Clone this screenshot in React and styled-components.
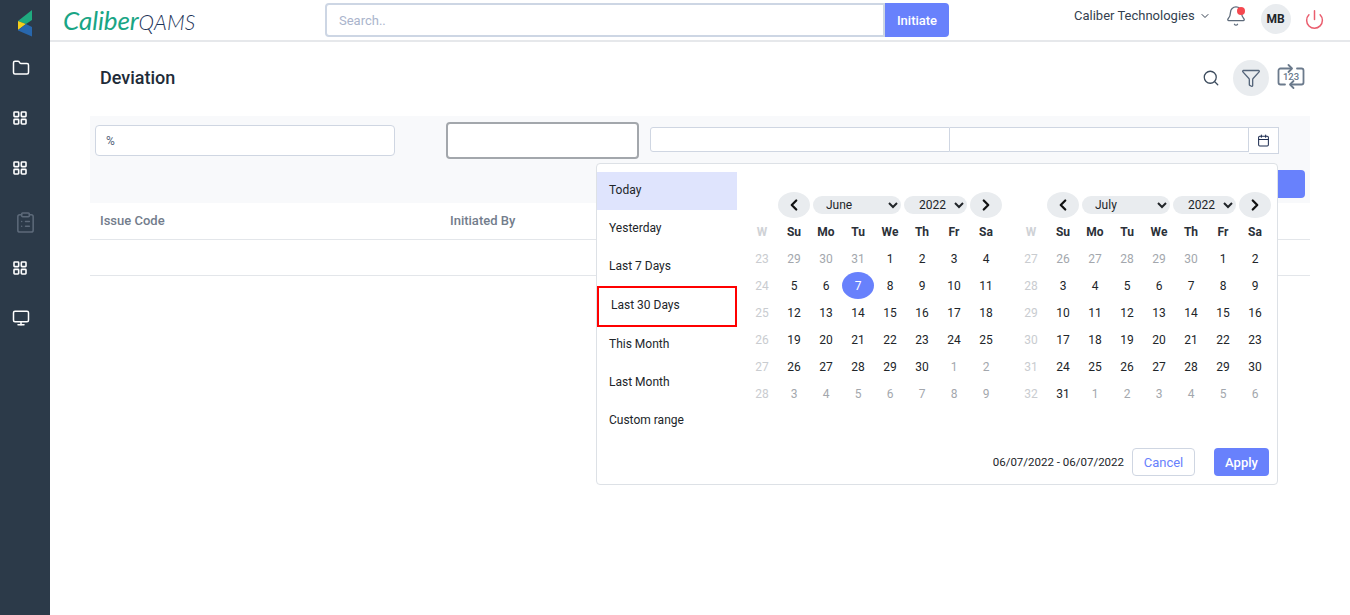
import React from 'react';
import styled, { createGlobalStyle } from 'styled-components';
import { Folder, LayoutGrid, ClipboardList, Monitor, ChevronDown, ChevronLeft, ChevronRight, Bell, Power, Search, Funnel, Calendar } from 'lucide-react';

const Global = createGlobalStyle`
  html, body { margin: 0; height: 100%; overflow: hidden; background: #fff; }
  body { font-family: Roboto, "Liberation Sans", sans-serif; color: #212529; }
  * { box-sizing: border-box; }
`;

const Shell = styled.div`display: flex; height: 615px; width: 1350px; overflow: hidden;`;
const Sidebar = styled.aside`width: 50px; flex: none; background: #2c3a49; display: flex; flex-direction: column;`;
const LogoSlot = styled.div`height: 43px; display: flex; align-items: center; justify-content: flex-start; padding: 3px 0 0 17px;`;
const NavItem = styled.div`
  height: 50px; display: flex; align-items: center; color: ${p => p.$dim ? '#5d6a7a' : '#fff'};
  padding-left: ${p => p.$left}px; padding-top: ${p => p.$dim ? 8 : 0}px;
`;
const Main = styled.div`flex: 1; min-width: 0; display: flex; flex-direction: column;`;

const Topbar = styled.header`height: 42px; flex: none; border-bottom: 2px solid #e6e8eb; display: flex; align-items: flex-start; background: #fff;`;
const Brand = styled.div`
  width: 275px; flex: none; padding: 6px 0 0 13px; font-family: "Lato", sans-serif; font-style: italic; font-size: 26px; line-height: 28px; letter-spacing: -.1px; color: #19a585; white-space: nowrap;
`;
const BrandThin = styled.span`font-family: "Lato", sans-serif; font-weight: 300; color: #1c3358; font-size: 21px; letter-spacing: .2px;`;
const SearchGroup = styled.div`width: 624px; flex: none; display: flex; margin-top: 3px; height: 34px;`;
const SearchInput = styled.input`
  flex: 1; min-width: 0; border: 2px solid #cdd6e4; border-radius: 4px 0 0 4px; padding: 0 12px; font: 13px Roboto, sans-serif; outline: none;
  &::placeholder { color: #aab4cc; }
`;
const InitiateButton = styled.button`width: 64px; border: none; border-radius: 0 4px 4px 0; background: #6881fc; color: #fff; font: 500 13px Roboto, sans-serif;`;
const Company = styled.div`
  margin-left: 125px; margin-top: 8px; display: flex; align-items: center; gap: 4px; font-size: 13px; line-height: 16px; color: #343f4f; white-space: nowrap;
`;
const BellWrap = styled.div`position: relative; margin-left: 14px; margin-top: 5px; width: 22px; height: 22px; color: #5d6a7a; display: flex;`;
const BellDot = styled.span`position: absolute; right: 2px; top: 2px; width: 8px; height: 8px; border-radius: 50%; background: #f5484f;`;
const Avatar = styled.div`
  margin-left: 14px; margin-top: 4px; width: 30px; height: 30px; border-radius: 50%; background: #e9ecef; display: flex; align-items: center; justify-content: center; font-size: 12px; font-weight: 700; color: #212529;
`;
const PowerWrap = styled.div`margin-left: 13px; margin-top: 9px; color: #ea5d6e; display: flex;`;

const Content = styled.main`padding: 0 40px; flex: 1;`;
const PageHead = styled.div`height: 74px; display: flex; align-items: flex-start; padding-left: 10px;`;
const Title = styled.h1`margin: 25px 0 0; font-size: 18px; line-height: 22px; font-weight: 500; color: #212b38; flex: 1;`;
const HeadTools = styled.div`display: flex; align-items: center; margin-top: 18px; margin-right: 5px; color: #3d4c5e;`;
const FilterCircle = styled.div`width: 36px; height: 36px; border-radius: 50%; background: #e9ecef; display: flex; align-items: center; justify-content: center; margin: 0 8px 0 13px; color: #55657a;`;

const Panel = styled.section`position: relative; background: #f8f9fb; height: 87px;`;
const FilterRow = styled.div`display: flex; align-items: center; height: 49px; padding-left: 5px;`;
const FieldPercent = styled.input`
  width: 300px; height: 31px; border: 1px solid #cfd6e2; border-radius: 4px; padding: 0 10px; font: 12px Roboto, sans-serif; color: #55657a; background: #fff; outline: none;
`;
const FieldFocused = styled.input`
  margin-left: 51px; width: 193px; height: 37px; border: 2px solid #a3a7ac; border-radius: 4px; background: #fff; outline: none;
`;
const DateGroup = styled.div`margin-left: 11px; display: flex; align-items: flex-start; height: 27px;`;
const DateField = styled.input`
  width: ${p => p.$w}px; height: 25px; border: 1px solid #cfd6e2; border-left-width: ${p => p.$joined ? 0 : 1}px; border-radius: ${p => p.$joined ? 0 : '3px 0 0 3px'}; background: #fff; outline: none;
`;
const DateAddon = styled.div`width: 30px; height: 27px; border: 1px solid #cfd6e2; border-left: none; background: #fff; display: flex; align-items: center; justify-content: center; color: #1d2c50;`;
const SubmitRow = styled.div`display: flex; justify-content: flex-end; padding: 5px 5px 0 0;`;
const SubmitButton = styled.button`width: 80px; height: 28px; border: none; border-radius: 4px; background: #6881fc;`;

const TableHead = styled.div`height: 37px; border-bottom: 1px solid #e3e6ea; display: flex; align-items: center; font-size: 13px; font-weight: 500; color: #737d8c;`;
const HeadCell = styled.div`width: 350px; padding-left: 10px; flex: none; margin-top: -1px;`;
const TableRow = styled.div`height: 36px; border-bottom: 1px solid #e3e6ea;`;

const Popup = styled.div`
  position: absolute; left: 506px; top: 47px; width: 682px; height: 322px; background: #fff; border: 1px solid #dde1e6; border-radius: 4px; display: flex; z-index: 5;
`;
const Ranges = styled.ul`list-style: none; margin: 8px 0 0; padding: 0; width: 140px; flex: none;`;
const Range = styled.li`
  height: 38px; display: flex; align-items: center; padding: 0 0 2px 12px; font-size: 12px; color: #212529; background: ${p => p.$active ? '#dfe4fd' : 'transparent'};
`;
const RangeOutlined = styled(Range)`
  height: 41px; margin-bottom: -1px; border: 2px solid #f00; padding: 0 0 3px 12px;
`;
const Right = styled.div`flex: 1; min-width: 0; padding: 27px 8px 0 9px; display: flex; flex-direction: column;`;
const Months = styled.div`display: flex; gap: 13px;`;
const Month = styled.div`display: grid; flex: none; grid-template-columns: repeat(8, 32px); grid-auto-rows: 27px; align-items: center; justify-items: center; width: 256px; font-size: 12px;`;
const MonthNav = styled.div`grid-column: 2 / 9; width: 224px; display: flex; align-items: center; justify-content: space-between; height: 26px; align-self: start; margin-top: 1px;`;
const NavCircle = styled.button`width: 32px; height: 26px; border: none; border-radius: 50%; background: #e9ecef; padding: 0; display: flex; align-items: center; justify-content: center; color: #111;`;
const Select = styled.select`
  width: ${p => p.$w}px; height: 18px; border: none; border-radius: 9px; background-color: #e9ecef; font: 12px Roboto, sans-serif; color: #212529; padding: 0 0 0 ${p => p.$pad}px; outline: none;
`;
const Spacer = styled.div``;
const WeekHead = styled.div`font-weight: 700; font-size: 12px; color: ${p => p.$w ? '#cfd2d6' : '#2b3138'};`;
const WeekNo = styled.div`color: #c9ccd0;`;
const Day = styled.div`
  width: 32px; height: 27px; display: flex; align-items: center; justify-content: center; border-radius: 50%;
  color: ${p => p.$sel ? '#fff' : p.$off ? '#a3a7ad' : '#212529'}; background: ${p => p.$sel ? '#6881fc' : 'transparent'};
`;
const Footer = styled.div`display: flex; align-items: center; justify-content: flex-end; margin-top: 41px;`;
const RangeText = styled.span`font-size: 11.5px; color: #212529; margin-right: 8px;`;
const CancelButton = styled.button`width: 63px; height: 28px; border: 1px solid #cfd6e2; border-radius: 4px; background: #fff; color: #6881fc; font: 13px Roboto, sans-serif; margin-right: 19px;`;
const ApplyButton = styled.button`width: 55px; height: 28px; border: none; border-radius: 4px; background: #6881fc; color: #fff; font: 500 13px Roboto, sans-serif;`;

const weekdays = ['Su', 'Mo', 'Tu', 'We', 'Th', 'Fr', 'Sa'];
const MONTHS = ['January','February','March','April','May','June','July','August','September','October','November','December'];

function buildWeeks(firstWeek, start, prevLen, len) {
  const weeks = [];
  let d = start, off = start > 1, m = prevLen;
  for (let w = 0; w < 6; w++) {
    const cells = [];
    for (let i = 0; i < 7; i++) {
      cells.push({ d, off });
      d++;
      if (d > m) { d = 1; off = !off; m = len; }
    }
    weeks.push({ no: firstWeek + w, cells });
  }
  return weeks;
}

function Cal({ month, first, start, prevLen, len, sel }) {
  const weeks = buildWeeks(first, start, prevLen, len);
  return (
    <Month>
      <Spacer />
      <MonthNav>
        <NavCircle aria-label="Previous"><ChevronLeft size={18} strokeWidth={3} /></NavCircle>
        <Select $w={88} $pad={9} defaultValue={month}>{MONTHS.map(x => <option key={x}>{x}</option>)}</Select>
        <Select $w={63} $pad={11} defaultValue="2022"><option>2021</option><option>2022</option><option>2023</option></Select>
        <NavCircle aria-label="Next"><ChevronRight size={18} strokeWidth={3} /></NavCircle>
      </MonthNav>
      <WeekHead $w>W</WeekHead>
      {weekdays.map(w => <WeekHead key={w}>{w}</WeekHead>)}
      {weeks.map(w => (
        <React.Fragment key={w.no}>
          <WeekNo>{w.no}</WeekNo>
          {w.cells.map((c, i) => <Day key={i} $off={c.off} $sel={sel && !c.off && c.d === sel}>{c.d}</Day>)}
        </React.Fragment>
      ))}
    </Month>
  );
}

const KLogo = () => (
  <svg width="16" height="28" viewBox="0 0 16 28">
    <polygon points="15,1 1,12 9,15 15,11" fill="#1faa7f" />
    <polygon points="1,12 9,15 1,21" fill="#f4cf1c" />
    <polygon points="15,18 9,15 1,21 1,21.5 15,27.5" fill="#2867ad" />
  </svg>
);

const Swap123 = () => (
  <svg width="28" height="28" viewBox="0 0 28 28" fill="none" stroke="#6b7a8c" strokeWidth="1.8" strokeLinecap="round" strokeLinejoin="round">
    <path d="M14 4.5H3.5a2 2 0 0 0-2 2V18.5a2 2 0 0 0 2 2H8" />
    <path d="M11.5 1l3.5 3.5-3.5 3.5" />
    <path d="M20 4.5h4.5a2 2 0 0 1 2 2V18.5a2 2 0 0 1-2 2H14" />
    <path d="M16.500 17l-3.500 3.500 3.500 3.500" />
    <text x="14" y="16" textAnchor="middle" fontFamily="Roboto, sans-serif" fontSize="9.500" fontWeight="500" fill="#6b7a8c" stroke="none">123</text>
  </svg>
);

export default function App() {
  return (
    <Shell>
      <Global />
      <Sidebar>
        <LogoSlot><KLogo /></LogoSlot>
        <NavItem $left={12}><Folder size={18} strokeWidth={2} /></NavItem>
        <NavItem $left={12}><LayoutGrid size={16} strokeWidth={2.4} /></NavItem>
        <NavItem $left={12}><LayoutGrid size={16} strokeWidth={2.4} /></NavItem>
        <NavItem $left={14} $dim><ClipboardList size={23} strokeWidth={1.6} /></NavItem>
        <NavItem $left={12}><LayoutGrid size={16} strokeWidth={2.4} /></NavItem>
        <NavItem $left={12}><Monitor size={18} strokeWidth={2} /></NavItem>
      </Sidebar>
      <Main>
        <Topbar>
          <Brand>Caliber<BrandThin>QAMS</BrandThin></Brand>
          <SearchGroup>
            <SearchInput placeholder="Search.." />
            <InitiateButton>Initiate</InitiateButton>
          </SearchGroup>
          <Company>Caliber Technologies <ChevronDown size={12} /></Company>
          <BellWrap><Bell size={22} strokeWidth={1.4} /><BellDot /></BellWrap>
          <Avatar>MB</Avatar>
          <PowerWrap><Power size={21} strokeWidth={1.7} /></PowerWrap>
        </Topbar>
        <Content>
          <PageHead>
            <Title>Deviation</Title>
            <HeadTools>
              <Search size={18} strokeWidth={1.7} />
              <FilterCircle><Funnel size={20} strokeWidth={1.6} /></FilterCircle>
              <Swap123 />
            </HeadTools>
          </PageHead>
          <Panel>
            <FilterRow>
              <FieldPercent defaultValue="%" />
              <FieldFocused />
              <DateGroup>
                <DateField $w={300} />
                <DateField $w={299} $joined />
                <DateAddon><Calendar size={13} strokeWidth={1.9} /></DateAddon>
              </DateGroup>
            </FilterRow>
            <SubmitRow><SubmitButton aria-label="Search" /></SubmitRow>
            <Popup>
              <Ranges>
                <Range $active>Today</Range>
                <Range>Yesterday</Range>
                <Range>Last 7 Days</Range>
                <RangeOutlined>Last 30 Days</RangeOutlined>
                <Range>This Month</Range>
                <Range>Last Month</Range>
                <Range>Custom range</Range>
              </Ranges>
              <Right>
                <Months>
                  <Cal month="June" first={23} start={29} prevLen={31} len={30} sel={7} />
                  <Cal month="July" first={27} start={26} prevLen={30} len={31} />
                </Months>
                <Footer>
                  <RangeText>06/07/2022 - 06/07/2022</RangeText>
                  <CancelButton>Cancel</CancelButton>
                  <ApplyButton>Apply</ApplyButton>
                </Footer>
              </Right>
            </Popup>
          </Panel>
          <TableHead>
            <HeadCell>Issue Code</HeadCell>
            <HeadCell>Initiated By</HeadCell>
          </TableHead>
          <TableRow />
        </Content>
      </Main>
    </Shell>
  );
}
